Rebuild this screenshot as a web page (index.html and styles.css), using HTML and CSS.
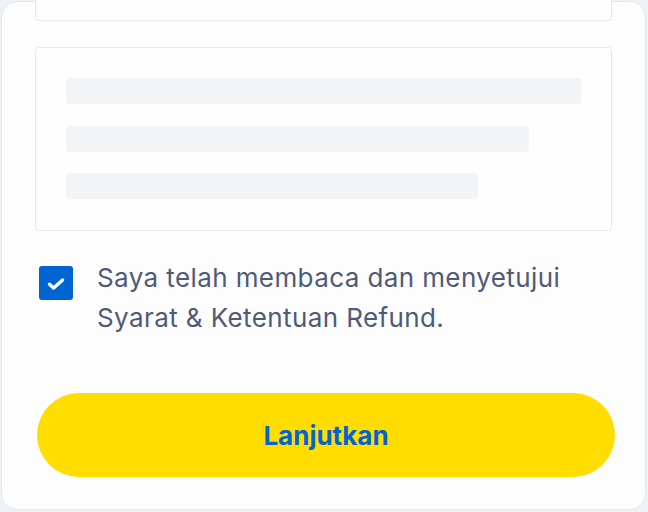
FILE: index.html
```html
<!DOCTYPE html>
<html lang="id">
<head>
<meta charset="utf-8">
<title>Refund</title>
<link rel="stylesheet" href="styles.css">
</head>
<body>
  <div class="card">
    <div class="box box-top"></div>
    <div class="box box-skeleton">
      <div class="bar bar-full"></div>
      <div class="bar bar-90"></div>
      <div class="bar bar-80"></div>
    </div>
    <label class="agree">
      <span class="check">
        <svg width="34" height="34" viewBox="0 0 34 34" aria-hidden="true">
          <path d="M10.5 18.2 L14.6 22 L23.6 14" fill="none" stroke="#ffffff" stroke-width="3.4" stroke-linecap="round" stroke-linejoin="round"/>
        </svg>
      </span>
      <span class="agree-text">Saya telah membaca dan menyetujui Syarat &amp; Ketentuan Refund.</span>
    </label>
    <button class="btn-next" type="button">Lanjutkan</button>
  </div>
</body>
</html>
```

FILE: styles.css
```css
* { box-sizing: border-box; }

html, body {
  margin: 0;
  padding: 0;
  width: 648px;
  height: 512px;
  overflow: hidden;
  background: #eef1f6;
  font-family: Inter, "Noto Sans", "Liberation Sans", sans-serif;
}

body {
  padding: 1px 2px 0 1px;
}

.card {
  height: 509px;
  background: #fdfdfe;
  border: 1px solid #e4e7ef;
  border-radius: 16px;
  padding: 0 33px 0 33px;
  display: flex;
  flex-direction: column;
}

.box {
  border: 1px solid #e6e8f1;
  background: #fefefe;
}

.box-top {
  height: 21px;
  margin-top: -2px;
  border-top: none;
  border-radius: 0 0 4px 4px;
}

.box-skeleton {
  margin-top: 26px;
  height: 184px;
  border-radius: 4px;
  padding: 30px 30px 0 30px;
  display: flex;
  flex-direction: column;
  gap: 21.5px;
}

.bar {
  height: 26px;
  background: #f3f4f8;
  border-radius: 4px;
}

.bar-full { width: 100%; }
.bar-90 { width: 463px; }
.bar-80 { width: 412px; }

.agree {
  margin-top: 35px;
  display: flex;
  align-items: flex-start;
  gap: 24px;
  padding-left: 4px;
}

.check {
  flex: 0 0 34px;
  width: 34px;
  height: 34px;
  background: #0064d2;
  border-radius: 3px;
  display: flex;
}

.agree-text {
  margin-top: -8px;
  font-size: 26px;
  line-height: 40px;
  color: #4f5a76;
  letter-spacing: 0.4px;
}

.btn-next {
  margin: 55px -3px 0 2px;
  height: 84px;
  border: none;
  border-radius: 42px;
  background: #ffdd00;
  color: #0064d2;
  font-family: Inter, "Noto Sans", "Liberation Sans", sans-serif;
  font-size: 26px;
  font-weight: 700;
  cursor: pointer;
}
```
